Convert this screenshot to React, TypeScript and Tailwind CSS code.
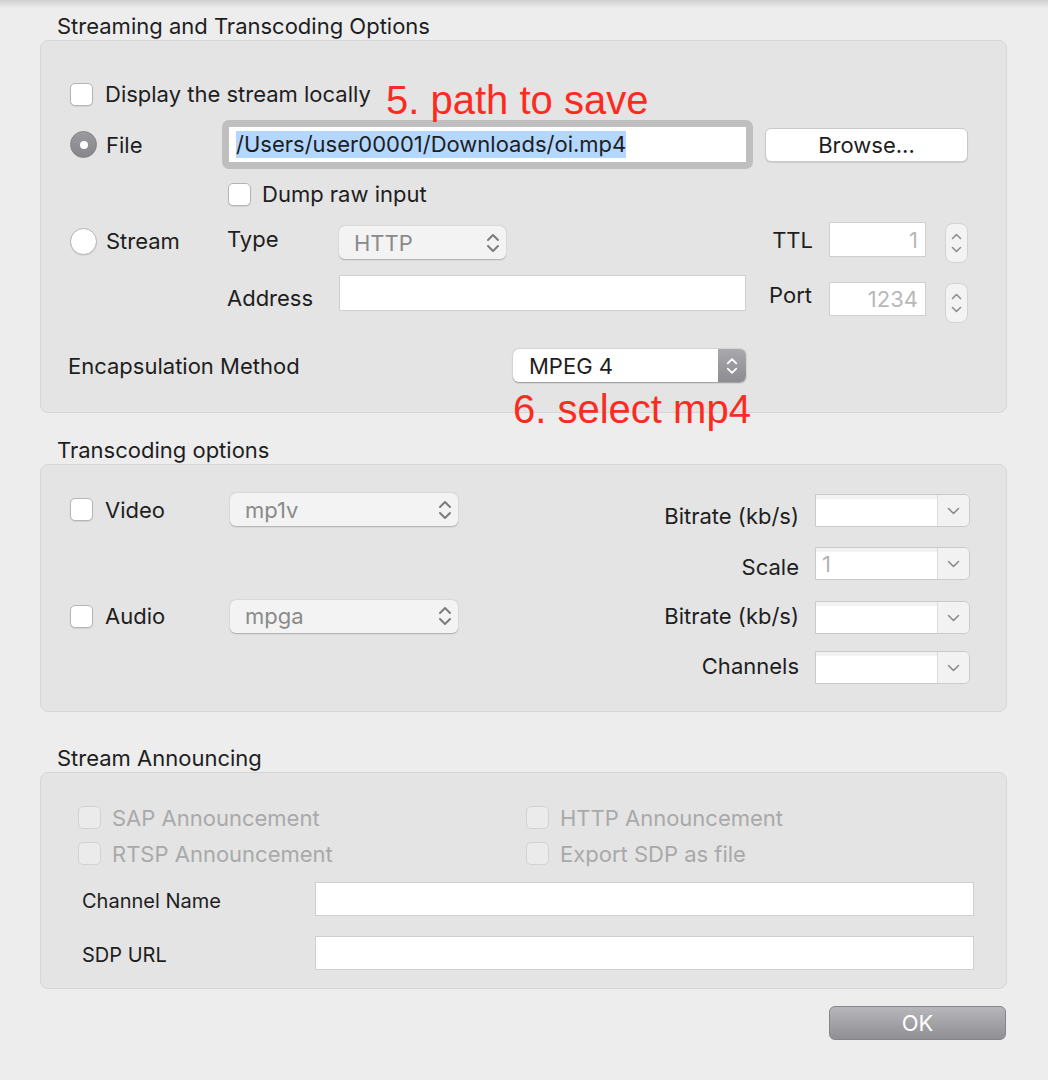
import React from 'react'

function Checkbox({ disabled = false }: { disabled?: boolean }) {
  return (
    <div
      className={
        disabled
          ? 'w-[23px] h-[23px] shrink-0 rounded-[5px] border border-[#d2d2d2] bg-[#ebebeb]'
          : 'w-[23px] h-[23px] shrink-0 rounded-[5px] border border-[#b4b4b4] bg-white shadow-[0_1px_1px_rgba(0,0,0,0.08)]'
      }
    />
  )
}

function Radio({ checked = false }: { checked?: boolean }) {
  if (checked) {
    return (
      <div className="w-[27px] h-[27px] shrink-0 rounded-full bg-gradient-to-b from-[#9a9a9f] to-[#86868b] border border-[#808085] flex items-center justify-center">
        <div className="w-[8px] h-[8px] rounded-full bg-white" />
      </div>
    )
  }
  return <div className="w-[27px] h-[27px] shrink-0 rounded-full bg-white border border-[#b4b4b4] shadow-[0_1px_1px_rgba(0,0,0,0.08)]" />
}

function UpDown({ color = '#7c7c7c', w = 14 }: { color?: string; w?: number }) {
  return (
    <svg width={w} height="22" viewBox="0 0 14 22" fill="none" stroke={color} strokeWidth="2" strokeLinecap="round" strokeLinejoin="round">
      <path d="M2 8 L7 3 L12 8" />
      <path d="M2 14 L7 19 L12 14" />
    </svg>
  )
}

function Popup({ value, w, disabled = true }: { value: string; w: number; disabled?: boolean }) {
  if (!disabled) {
    return (
      <div
        className="h-[33px] flex rounded-[6px] bg-white shadow-[0_0.5px_1.5px_rgba(0,0,0,0.35)] overflow-hidden"
        style={{ width: w }}
      >
        <div className="flex-1 pl-[16px] flex items-center text-[#1e1e1e]">{value}</div>
        <div className="w-[28px] bg-gradient-to-b from-[#a9a9ad] to-[#8c8c91] flex items-center justify-center">
          <UpDown color="#ffffff" w={12} />
        </div>
      </div>
    )
  }
  return (
    <div
      className="h-[33px] flex items-center justify-between pl-[15px] pr-[6px] rounded-[6px] bg-[#f3f3f3] shadow-[0_0.5px_1.5px_rgba(0,0,0,0.25)] text-[#8a8a8a]"
      style={{ width: w }}
    >
      <span>{value}</span>
      <UpDown />
    </div>
  )
}

function Stepper() {
  return (
    <div className="w-[23px] h-[40px] shrink-0 rounded-[8px] border border-[#d3d3d3] bg-[#f3f3f3] flex flex-col items-center justify-center gap-[6px]">
      <svg width="11" height="7" viewBox="0 0 11 7" fill="none" stroke="#8e8e8e" strokeWidth="1.6" strokeLinecap="round" strokeLinejoin="round">
        <path d="M1.5 5.5 L5.5 1.5 L9.5 5.5" />
      </svg>
      <svg width="11" height="7" viewBox="0 0 11 7" fill="none" stroke="#8e8e8e" strokeWidth="1.6" strokeLinecap="round" strokeLinejoin="round">
        <path d="M1.5 1.5 L5.5 5.5 L9.5 1.5" />
      </svg>
    </div>
  )
}

function Combo({ value = '' }: { value?: string }) {
  return (
    <div className="w-[155px] h-[33px] shrink-0 flex border border-[#cacaca] rounded-r-[6px] bg-[#f4f4f4] overflow-hidden">
      <div className="w-[121px] bg-white shadow-[inset_0_4px_0_#f2f2f2] pl-[6px] flex items-center text-[#b4b4b4]">{value}</div>
      <div className="flex-1 border-l border-[#dcdcdc] bg-[#f2f2f2] flex items-center justify-center">
        <svg width="13" height="8" viewBox="0 0 13 8" fill="none" stroke="#8c8c8c" strokeWidth="1.6" strokeLinecap="round" strokeLinejoin="round">
          <path d="M1.5 1.5 L6.5 6.5 L11.5 1.5" />
        </svg>
      </div>
    </div>
  )
}

function NumField({ value, h }: { value: string; h: number }) {
  return (
    <div
      className="w-[97px] shrink-0 border border-[#cfcfcf] bg-white flex items-center justify-end pr-[7px] text-[#b8b8b8]"
      style={{ height: h }}
    >
      {value}
    </div>
  )
}

export default function App() {
  return (
    <div className="relative w-full h-[1080px] overflow-hidden bg-[#ededed] text-[#1e1e1e] font-['Inter','Noto_Sans',sans-serif] text-[22px] leading-[26px]">
      <div className="h-[8px] bg-gradient-to-b from-[#d0d0d0] to-[#ededed]" />

      <div className="pl-[40px] pr-[41px]">
        {/* Streaming and Transcoding Options */}
        <div className="mt-[5px] ml-[17px]">Streaming and Transcoding Options</div>
        <div className="mt-[1px] h-[373px] rounded-[8px] border border-[#d6d6d6] bg-[#e4e4e4] pt-[41px]">
          <div className="flex items-center h-[24px] pl-[29px]">
            <Checkbox />
            <span className="ml-[12px]">Display the stream locally</span>
          </div>

          <div className="mt-[14px] flex items-center h-[49px] pl-[29px]">
            <Radio checked />
            <span className="ml-[9px] w-[116px]">File</span>
            <div className="w-[531px] h-[49px] rounded-[7px] bg-[#bfbfbf] p-[7px]">
              <div className="h-[35px] bg-white flex items-center pl-[7px]">
                <span className="bg-[#b3d7ff] leading-[27px]">/Users/user00001/Downloads/oi.mp4</span>
              </div>
            </div>
            <div className="ml-[12px] w-[203px] h-[34px] rounded-[6px] bg-white border border-[#c8c8c8] shadow-[0_1px_1px_rgba(0,0,0,0.1)] flex items-center justify-center">
              Browse...
            </div>
          </div>

          <div className="mt-[13px] flex items-center h-[24px] pl-[187px]">
            <Checkbox />
            <span className="ml-[11px]">Dump raw input</span>
          </div>

          <div className="mt-[16px] flex items-start h-[41px] pl-[29px]">
            <div className="mt-[6px]">
              <Radio />
            </div>
            <span className="ml-[9px] mt-[6px] w-[121px]">Stream</span>
            <span className="mt-[4px] w-[112px]">Type</span>
            <div className="mt-[4px]">
              <Popup value="HTTP" w={167} />
            </div>
            <span className="mt-[5px] w-[307px] text-right">TTL</span>
            <div className="ml-[16px]">
              <NumField value="1" h={35} />
            </div>
            <div className="ml-[19px] mt-[1px]">
              <Stepper />
            </div>
          </div>

          <div className="mt-[12px] flex items-start h-[48px] pl-[186px]">
            <span className="mt-[10px] w-[112px]">Address</span>
            <div className="w-[407px] h-[36px] border border-[#cfcfcf] bg-white" />
            <span className="mt-[7px] w-[66px] text-right">Port</span>
            <div className="ml-[17px] mt-[7px]">
              <NumField value="1234" h={34} />
            </div>
            <div className="ml-[19px] mt-[8px]">
              <Stepper />
            </div>
          </div>

          <div className="mt-[26px] flex items-center h-[33px] pl-[27px]">
            <span className="w-[445px]">Encapsulation Method</span>
            <Popup value="MPEG 4" w={233} disabled={false} />
          </div>
        </div>

        {/* Transcoding options */}
        <div className="mt-[24px] ml-[17px]">Transcoding options</div>
        <div className="mt-[1px] h-[248px] rounded-[8px] border border-[#d6d6d6] bg-[#e4e4e4] flex">
          <div className="pt-[28px] pl-[29px]">
            <div className="flex items-center h-[33px]">
              <Checkbox />
              <span className="ml-[12px] w-[125px]">Video</span>
              <Popup value="mp1v" w={228} />
            </div>
            <div className="mt-[74px] flex items-center h-[32px]">
              <Checkbox />
              <span className="ml-[12px] w-[125px]">Audio</span>
              <Popup value="mpga" w={228} />
            </div>
          </div>

          <div className="flex-1 pt-[29px] pr-[36px] flex flex-col items-end">
            <div className="flex items-start h-[33px]">
              <span className="mt-[9px]">Bitrate (kb/s)</span>
              <div className="ml-[16px]">
                <Combo />
              </div>
            </div>
            <div className="mt-[20px] flex items-start h-[33px]">
              <span className="mt-[7px]">Scale</span>
              <div className="ml-[16px]">
                <Combo value="1" />
              </div>
            </div>
            <div className="mt-[21px] flex items-start h-[33px]">
              <span className="mt-[2px]">Bitrate (kb/s)</span>
              <div className="ml-[16px]">
                <Combo />
              </div>
            </div>
            <div className="mt-[17px] flex items-start h-[33px]">
              <span className="mt-[2px]">Channels</span>
              <div className="ml-[16px]">
                <Combo />
              </div>
            </div>
          </div>
        </div>

        {/* Stream Announcing */}
        <div className="mt-[33px] ml-[17px]">Stream Announcing</div>
        <div className="mt-[1px] h-[217px] rounded-[8px] border border-[#d6d6d6] bg-[#e4e4e4] pt-[33px]">
          <div className="flex items-center h-[23px] pl-[37px] text-[#a9a9a9]">
            <div className="w-[448px] flex items-center">
              <Checkbox disabled />
              <span className="ml-[11px]">SAP Announcement</span>
            </div>
            <Checkbox disabled />
            <span className="ml-[11px]">HTTP Announcement</span>
          </div>
          <div className="mt-[13px] flex items-center h-[23px] pl-[37px] text-[#a9a9a9]">
            <div className="w-[448px] flex items-center">
              <Checkbox disabled />
              <span className="ml-[11px]">RTSP Announcement</span>
            </div>
            <Checkbox disabled />
            <span className="ml-[11px]">Export SDP as file</span>
          </div>
          <div className="mt-[17px] flex items-center h-[34px] pl-[41px] text-[20px]">
            <span className="w-[233px] mt-[3px]">Channel Name</span>
            <div className="w-[659px] h-[34px] border border-[#cfcfcf] bg-white" />
          </div>
          <div className="mt-[20px] flex items-center h-[34px] pl-[41px] text-[20px]">
            <span className="w-[233px] mt-[3px]">SDP URL</span>
            <div className="w-[659px] h-[34px] border border-[#cfcfcf] bg-white" />
          </div>
        </div>

        <div className="mt-[17px] flex justify-end pr-[1px]">
          <div className="w-[177px] h-[34px] rounded-[6px] bg-gradient-to-b from-[#b7b7bb] to-[#8f8f94] border border-[#85858a] flex items-center justify-center text-white">
            OK
          </div>
        </div>
      </div>

      {/* annotations */}
      <div className="absolute left-[386px] top-[80px] font-['Liberation_Sans',Arial,sans-serif] text-[40px] leading-[40px] text-[#fc2b1f]">
        5. path to save
      </div>
      <div className="absolute left-[513px] top-[389px] font-['Liberation_Sans',Arial,sans-serif] text-[40px] leading-[40px] text-[#fc2b1f]">
        6. select mp4
      </div>
    </div>
  )
}
